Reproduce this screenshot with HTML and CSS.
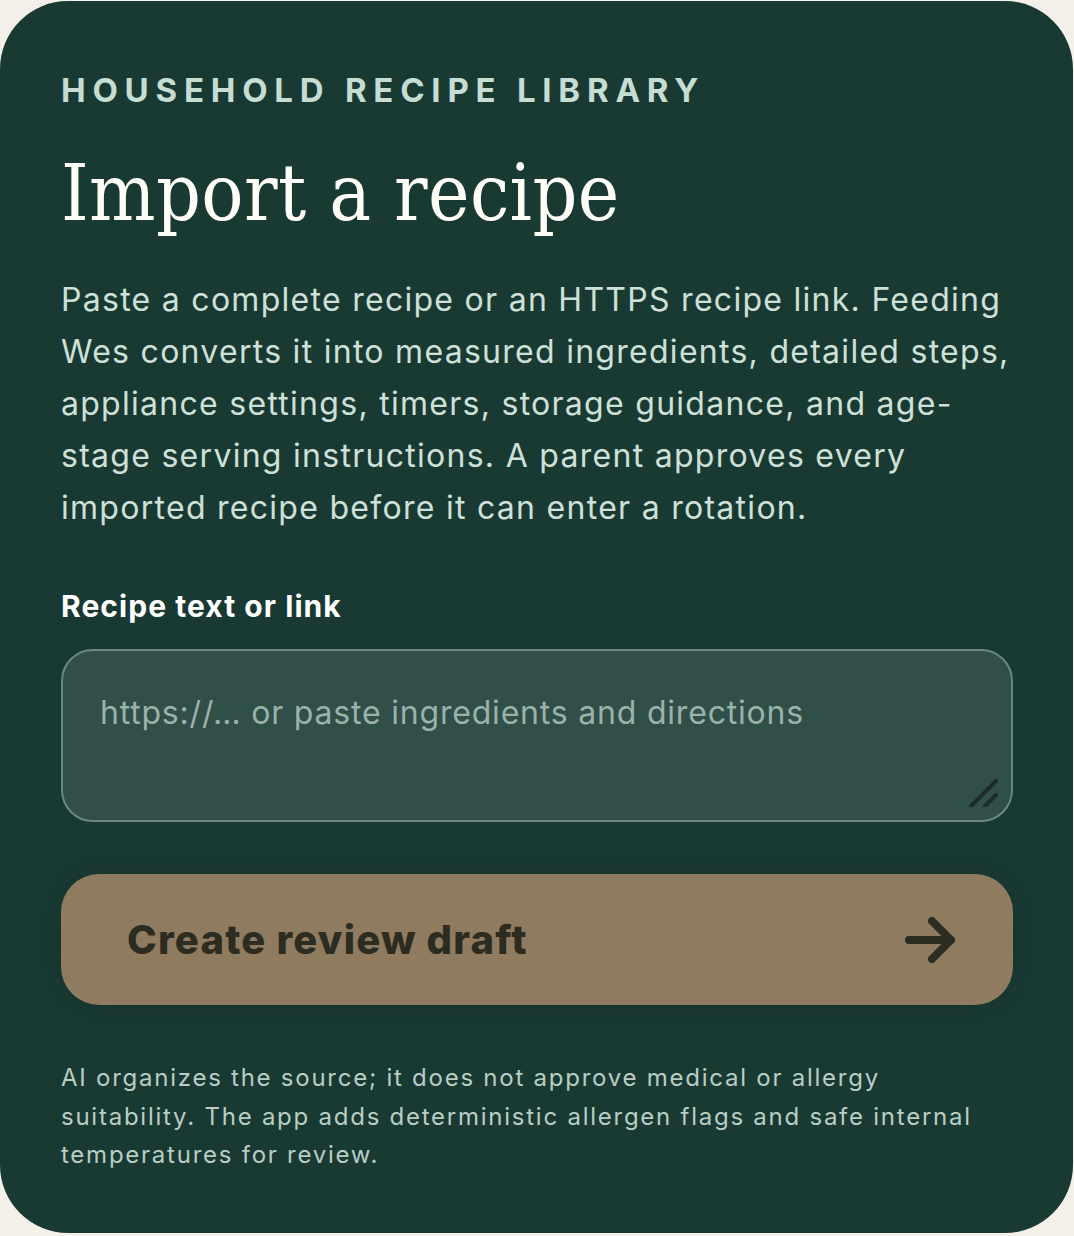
FILE: index.html
```html
<!DOCTYPE html>
<html lang="en">
<head>
    <meta charset="UTF-8">
    <meta name="viewport" content="width=device-width, initial-scale=1.0">
    <title>Import a recipe</title>
    <link rel="stylesheet" href="styles.css">
</head>
<body>
    <section class="import-card">
        <p class="eyebrow">Household recipe library</p>
        <h1 class="title">Import a recipe</h1>
        <p class="intro">Paste a complete recipe or an HTTPS recipe link. Feeding Wes converts it into measured ingredients, detailed steps, appliance settings, timers, storage guidance, and age-stage serving instructions. A parent approves every imported recipe before it can enter a rotation.</p>

        <label class="field-label" for="recipe-source">Recipe text or link</label>
        <div class="field-wrap">
            <textarea id="recipe-source" class="field" placeholder="https://… or paste ingredients and directions"></textarea>
            <svg class="grip" width="30" height="30" viewBox="0 0 30 30">
                <path d="M3 29 L28 4 M17 29 L28 18" stroke="#1d2e29" stroke-width="4" stroke-linecap="round" fill="none"/>
            </svg>
        </div>

        <button class="submit" type="button">
            <span>Create review draft</span>
            <svg width="52" height="46" viewBox="0 0 52 46">
                <path d="M4 23 H46 M27 4 L46 23 L27 42" stroke="#2d2c21" stroke-width="8" stroke-linecap="round" stroke-linejoin="round" fill="none"/>
            </svg>
        </button>

        <p class="note">AI organizes the source; it does not approve medical or allergy suitability. The app adds deterministic allergen flags and safe internal temperatures for review.</p>
    </section>
</body>
</html>
```

FILE: styles.css
```css
body {
    margin: 0;
    padding: 1px 1px 0 0;
    background: #f3f0e9;
    font-family: Inter, "Noto Sans", sans-serif;
}

.import-card {
    height: 1232px;
    box-sizing: border-box;
    background: #193a33;
    border-radius: 68px;
    padding: 69px 60px 0 61px;
}

.eyebrow {
    margin: 0;
    font-size: 33px;
    line-height: 40px;
    font-weight: 700;
    letter-spacing: 0.205em;
    text-transform: uppercase;
    color: #c6ddd3;
}

.title {
    margin: 37px 0 0;
    font-family: "DejaVu Serif Condensed", "DejaVu Serif", serif;
    font-stretch: condensed;
    font-size: 78px;
    line-height: 92px;
    font-weight: 400;
    letter-spacing: 0.005em;
    color: #fdfcf7;
}

.intro {
    margin: 35px 0 0;
    font-size: 32px;
    line-height: 52px;
    color: #cfe0d8;
    letter-spacing: 0.04em;
}

.field-label {
    display: block;
    margin-top: 54px;
    font-size: 30px;
    line-height: 36px;
    font-weight: 700;
    letter-spacing: 0.035em;
    color: #ffffff;
}

.field-wrap {
    position: relative;
    margin-top: 25px;
}

.field {
    display: block;
    width: 100%;
    height: 173px;
    box-sizing: border-box;
    padding: 38px 37px;
    border: 2px solid #6b8781;
    border-radius: 32px;
    background: #2f4f48;
    font-family: inherit;
    font-size: 32px;
    line-height: 48px;
    letter-spacing: 0.025em;
    color: #e5efe9;
    resize: none;
    outline: none;
}

.field::placeholder {
    color: #9bb2aa;
}

.grip {
    position: absolute;
    right: 15px;
    bottom: 15px;
}

.submit {
    display: flex;
    align-items: center;
    justify-content: space-between;
    width: 100%;
    height: 131px;
    margin-top: 52px;
    padding: 0 56px 0 66px;
    border: none;
    border-radius: 38px;
    background: #8e7b60;
    box-shadow: 0 0 24px rgba(0, 0, 0, 0.12);
    font-family: inherit;
    font-size: 40px;
    font-weight: 800;
    letter-spacing: 0.03em;
    color: #2d2c21;
    cursor: pointer;
}

.note {
    margin: 54px 0 0;
    font-size: 24px;
    line-height: 38.5px;
    color: #b9cdc5;
    letter-spacing: 0.073em;
}
```
